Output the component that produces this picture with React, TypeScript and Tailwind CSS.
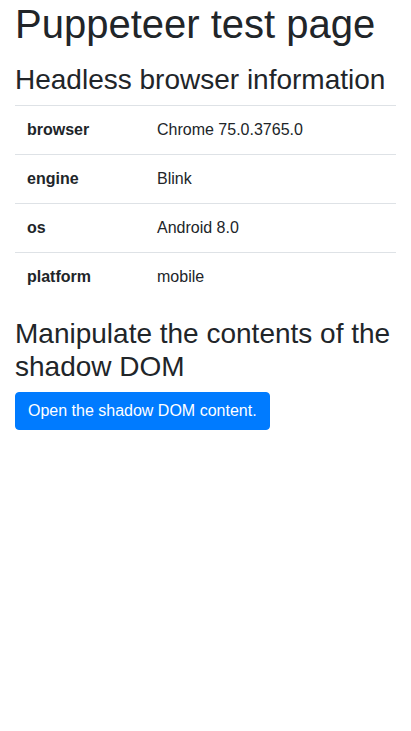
const rows: [string, string][] = [
  ['browser', 'Chrome 75.0.3765.0'],
  ['engine', 'Blink'],
  ['os', 'Android 8.0'],
  ['platform', 'mobile'],
];

export default function App() {
  return (
    <div className="min-h-screen bg-white px-[15px] text-[#212529] font-['Liberation_Sans',Arial,sans-serif] text-base leading-6">
      <h1 className="text-[40px] leading-[48px] font-medium mb-2">Puppeteer test page</h1>
      <h2 className="text-[28px] leading-[33.6px] font-medium mt-[15px] mb-2">Headless browser information</h2>
      <table className="w-full table-fixed border-collapse mb-4">
        <tbody>
          {rows.map(([k, v]) => (
            <tr key={k} className="border-t border-[#dee2e6]">
              <th className="w-[130px] p-3 text-left font-bold align-top">{k}</th>
              <td className="p-3 align-top">{v}</td>
            </tr>
          ))}
        </tbody>
      </table>
      <h2 className="text-[28px] leading-[33.6px] font-medium mb-2">Manipulate the contents of the shadow DOM</h2>
      <button className="bg-[#007bff] border border-[#007bff] text-white rounded px-3 py-1.5 text-base leading-6">
        Open the shadow DOM content.
      </button>
    </div>
  );
}
